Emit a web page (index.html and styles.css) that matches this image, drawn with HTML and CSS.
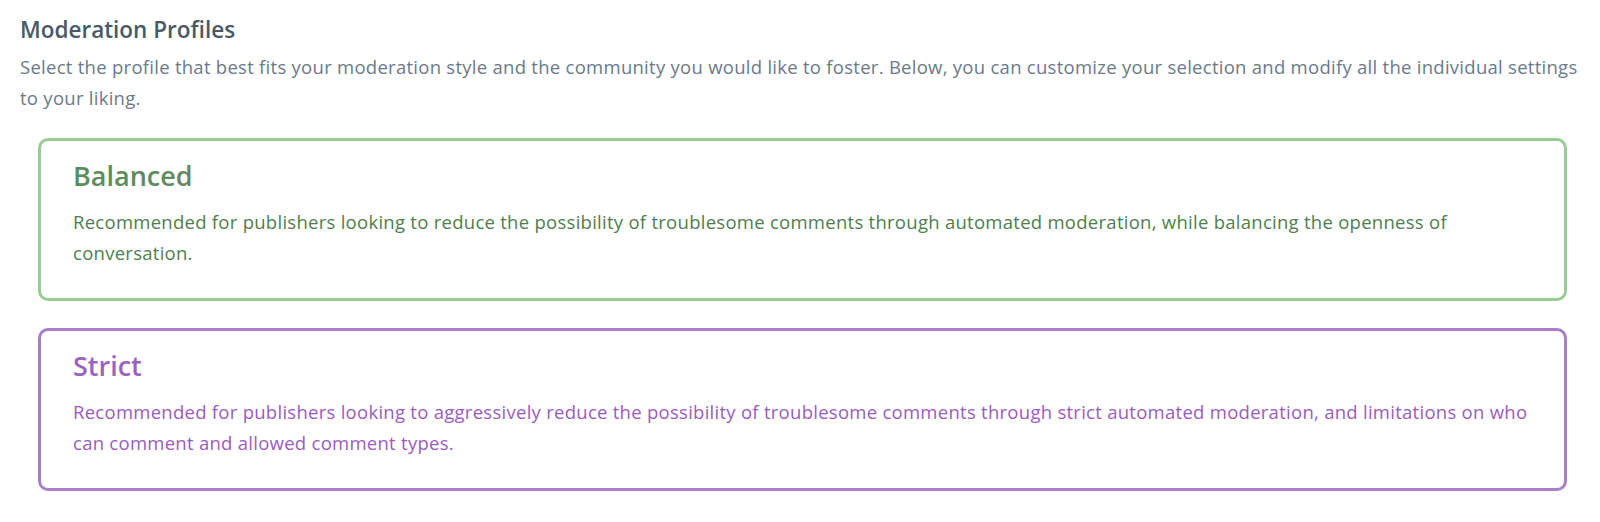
FILE: index.html
```html
<html lang="en"><head>
    <meta charset="UTF-8">
    <meta name="viewport" content="width=device-width, initial-scale=1.0">
    <title>Moderation Profiles</title>
    <link rel="stylesheet" href="styles.css">
</head>
<body>
    <div class="container">
        <h2 class="section-title">Moderation Profiles</h2>
        <p class="section-desc">Select the profile that best fits your moderation style and the community you would like to foster. Below, you can customize your selection and modify all the individual settings to your liking.</p>

        <!-- Balanced profile -->
        <div class="profile profile-balanced">
            <h3 class="profile-name">Balanced</h3>
            <p class="profile-desc">Recommended for publishers looking to reduce the possibility of troublesome comments through automated moderation, while balancing the openness of conversation.</p>
        </div>

        <!-- Strict profile -->
        <div class="profile profile-strict">
            <h3 class="profile-name">Strict</h3>
            <p class="profile-desc">Recommended for publishers looking to aggressively reduce the possibility of troublesome comments through strict automated moderation, and limitations on who can comment and allowed comment types.</p>
        </div>
    </div>
</body></html>
```

FILE: styles.css
```css
body {
    font-family: "Open Sans", "Noto Sans", sans-serif;
    margin: 0;
    padding: 0;
    background-color: #fff;
}
.container {
    padding: 16px 15px 0 20px;
}
.section-title {
    margin: 0;
    font-size: 22.5px;
    line-height: 28px;
    font-weight: 600;
    color: #4a5968;
}
.section-desc {
    margin: 7px 0 0 0;
    font-size: 18.5px;
    letter-spacing: 0.27px;
    line-height: 31px;
    color: #6b7a8a;
}
.profile {
    margin: 25px 18px 0 18px;
    padding: 17px 32px 30px 32px;
    border: 3px solid;
    border-radius: 10px;
    background-color: #fff;
}
.profile + .profile {
    margin-top: 27px;
}
.profile-name {
    margin: 0;
    font-size: 27px;
    line-height: 36px;
    font-weight: 600;
}
.profile-desc {
    margin: 12px 0 0 0;
    font-size: 18.5px;
    letter-spacing: 0.27px;
    line-height: 31px;
}

/* Colour per profile */
.profile-balanced {
    border-color: #98cc94;
}
.profile-balanced .profile-name {
    color: #5e8c5e;
}
.profile-balanced .profile-desc {
    color: #4f7e4e;
}
.profile-strict {
    border-color: #a77fc8;
}
.profile-strict .profile-name {
    color: #9b63c0;
}
.profile-strict .profile-desc {
    color: #9a5cc0;
}
```
